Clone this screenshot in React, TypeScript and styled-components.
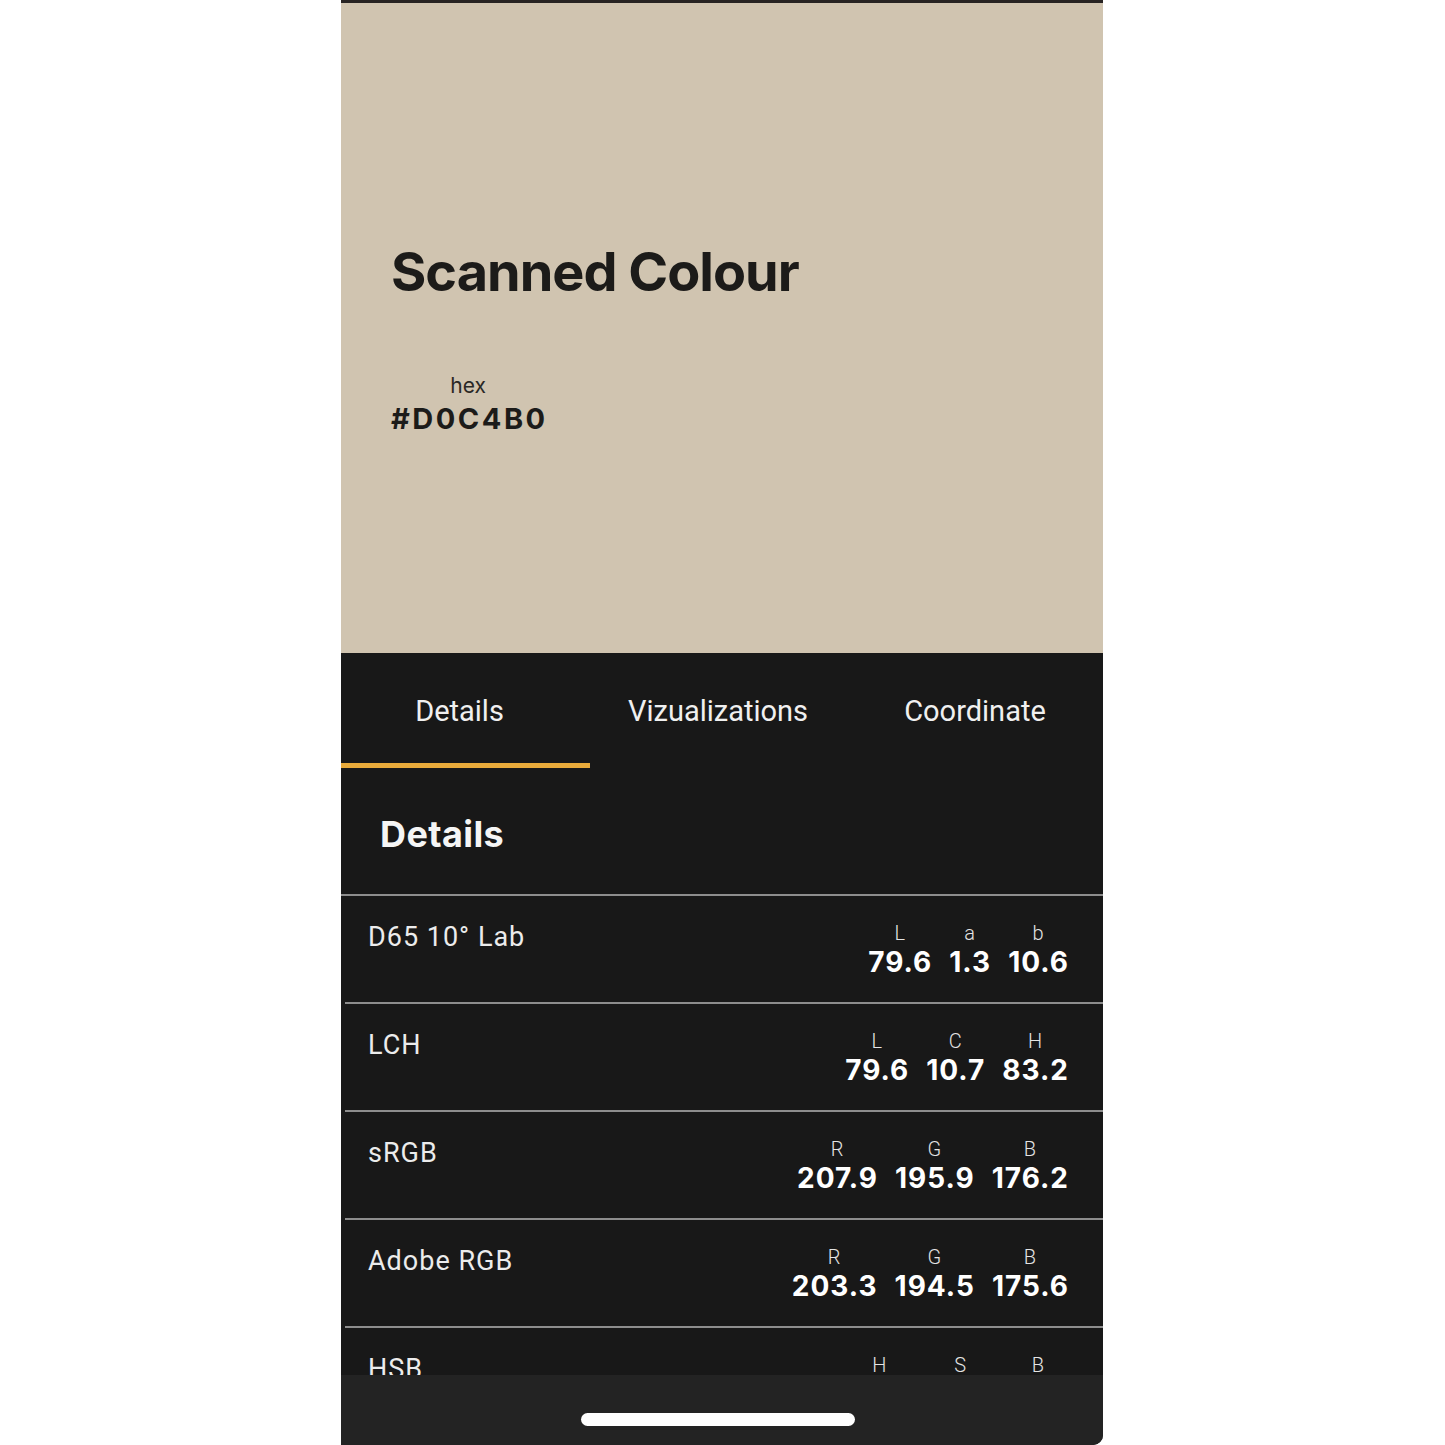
import React from "react";
import styled, { createGlobalStyle } from "styled-components";

const GlobalStyle = createGlobalStyle`
  html, body {
    margin: 0;
    padding: 0;
    background: #ffffff;
  }
`;

const Page = styled.div`
  width: 1445px;
  height: 1445px;
  display: flex;
  overflow: hidden;
`;

const Phone = styled.div`
  margin-left: 341px;
  width: 762px;
  height: 1445px;
  display: flex;
  flex-direction: column;
  border-top: 3px solid #272322;
  box-sizing: border-box;
  border-bottom-right-radius: 10px;
  overflow: hidden;
  background: #181818;
`;

const Swatch = styled.div<{ $color: string }>`
  height: 650px;
  flex-shrink: 0;
  background: ${(p) => p.$color};
  padding: 236px 0 0 50px;
  box-sizing: border-box;
  font-family: Inter, "Liberation Sans", sans-serif;
  color: #1c1b19;
`;

const Title = styled.h1`
  margin: 0;
  font-size: 54px;
  line-height: 65px;
  font-weight: 700;
  letter-spacing: -1px;
`;

const Hex = styled.div`
  margin-top: 69px;
  display: inline-flex;
  flex-direction: column;
  align-items: center;
`;

const HexLabel = styled.div`
  font-size: 21px;
  line-height: 26px;
  font-weight: 400;
  color: #2a2825;
`;

const HexValue = styled.div`
  font-size: 29px;
  line-height: 36px;
  margin-top: 2px;
  font-weight: 700;
  letter-spacing: 2.5px;
  margin-right: -2.5px;
`;

const Tabs = styled.div`
  display: grid;
  grid-template-columns: 1fr 1fr 1fr;
  height: 115px;
  flex-shrink: 0;
`;

const Tab = styled.div<{ $active?: boolean; $shift?: number }>`
  font-family: Roboto, "Liberation Sans", sans-serif;
  font-size: 29px;
  line-height: 32px;
  font-weight: 400;
  color: #f0f0f0;
  text-align: center;
  padding-top: 42px;
  box-sizing: border-box;
  border-bottom: 5px solid ${(p) => (p.$active ? "#e9ab3b" : "transparent")};
  margin-right: ${(p) => (p.$active ? "5px" : "0")};
  padding-right: ${(p) => (p.$active ? "12px" : `${p.$shift ?? 0}px`)};
`;

const SectionHead = styled.div`
  height: 128px;
  flex-shrink: 0;
  box-sizing: border-box;
  border-bottom: 2px solid #8d8d8d;
  padding: 44px 0 0 39px;
  font-family: Inter, "Liberation Sans", sans-serif;
  font-size: 36px;
  line-height: 44px;
  font-weight: 700;
  letter-spacing: 0.4px;
  color: #f5f5f5;
`;

const List = styled.div`
  flex: 1;
  overflow: hidden;
  display: flex;
  flex-direction: column;
`;

const Row = styled.div`
  height: 108px;
  flex-shrink: 0;
  box-sizing: border-box;
  margin-left: 4px;
  padding: 26px 35px 0 23px;
  border-bottom: 2px solid #8d8d8d;
  display: flex;
  justify-content: space-between;
  align-items: flex-start;
`;

const RowLabel = styled.div`
  font-family: Roboto, "Liberation Sans", sans-serif;
  font-size: 27px;
  line-height: 30px;
  font-weight: 400;
  letter-spacing: 1px;
  color: #ececec;
`;

const Values = styled.div`
  display: flex;
  gap: 18px;
  margin-top: -1px;
`;

const Value = styled.div`
  display: flex;
  flex-direction: column;
  align-items: center;
`;

const Channel = styled.div`
  font-family: Roboto, "Liberation Sans", sans-serif;
  font-size: 20px;
  line-height: 25px;
  font-weight: 300;
  color: #e4e4e4;
`;

const Number = styled.div`
  font-family: Inter, "Liberation Sans", sans-serif;
  font-size: 28px;
  line-height: 32px;
  font-weight: 700;
  letter-spacing: 1px;
  margin-right: -1px;
  color: #ffffff;
`;

const HomeBar = styled.div`
  height: 70px;
  flex-shrink: 0;
  background: #232323;
  padding-top: 38px;
  box-sizing: border-box;
`;

const Indicator = styled.div`
  width: 274px;
  height: 13px;
  margin-left: 240px;
  border-radius: 7px;
  background: #ffffff;
`;

type Space = {
  name: string;
  channels: [string, string][];
};

const spaces: Space[] = [
  { name: "D65 10° Lab", channels: [["L", "79.6"], ["a", "1.3"], ["b", "10.6"]] },
  { name: "LCH", channels: [["L", "79.6"], ["C", "10.7"], ["H", "83.2"]] },
  { name: "sRGB", channels: [["R", "207.9"], ["G", "195.9"], ["B", "176.2"]] },
  { name: "Adobe RGB", channels: [["R", "203.3"], ["G", "194.5"], ["B", "175.6"]] },
  { name: "HSB", channels: [["H", "38.0"], ["S", "15.3"], ["B", "81.5"]] },
];

export default function App() {
  return (
    <Page>
      <GlobalStyle />
      <Phone>
        <Swatch $color="#d0c4b0">
          <Title>Scanned Colour</Title>
          <Hex>
            <HexLabel>hex</HexLabel>
            <HexValue>#D0C4B0</HexValue>
          </Hex>
        </Swatch>

        <Tabs>
          <Tab $active>Details</Tab>
          <Tab $shift={8}>Vizualizations</Tab>
          <Tab $shift={2}>Coordinate</Tab>
        </Tabs>

        <SectionHead>Details</SectionHead>

        <List>
          {spaces.map((s) => (
            <Row key={s.name}>
              <RowLabel>{s.name}</RowLabel>
              <Values>
                {s.channels.map(([k, v]) => (
                  <Value key={k}>
                    <Channel>{k}</Channel>
                    <Number>{v}</Number>
                  </Value>
                ))}
              </Values>
            </Row>
          ))}
        </List>

        <HomeBar>
          <Indicator />
        </HomeBar>
      </Phone>
    </Page>
  );
}
